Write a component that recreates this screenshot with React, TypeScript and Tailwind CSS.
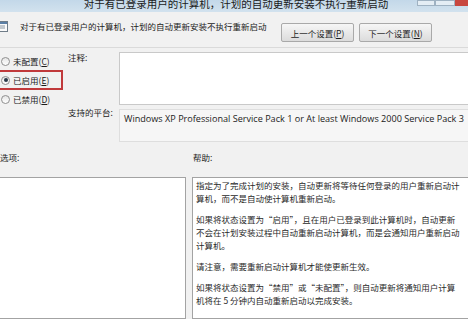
import React from 'react';

const helpParagraphs: string[][] = [
    [
        '指定为了完成计划的安装，自动更新将等待任何登录的用户重新启动计',
        '算机，而不是自动使计算机重新启动。',
    ],
    [
        '如果将状态设置为“启用”，且在用户已登录到此计算机时，自动更新',
        '不会在计划安装过程中自动重新启动计算机，而是会通知用户重新启动',
        '计算机。',
    ],
    ['请注意，需要重新启动计算机才能使更新生效。'],
    [
        '如果将状态设置为“禁用”或“未配置”，则自动更新将通知用户计算',
        '机将在 5 分钟内自动重新启动以完成安装。',
    ],
];

const Radio: React.FC<{ checked?: boolean; label: string; hotkey: string }> = ({ checked, label, hotkey }) => (
    <div className="flex items-center h-full">
        <span className="ml-[1px] w-[9px] h-[9px] rounded-full border border-[#8f8f8f] bg-gradient-to-b from-[#e6e6e6] to-white flex items-center justify-center">
            {checked && <span className="w-[4px] h-[4px] rounded-full bg-[#2a3a4a]" />}
        </span>
        <span className="ml-[3px] text-[8.5px] leading-[12px] text-[#1c1c1c]">
            {label}(<span className="underline">{hotkey}</span>)
        </span>
    </div>
);

const NavButton: React.FC<{ label: string; hotkey: string; width: string }> = ({ label, hotkey, width }) => (
    <button
        className={`${width} h-[19px] rounded-[2px] border border-[#a9a9a9] bg-gradient-to-b from-[#f6f6f6] to-[#dcdcdc] text-[8.5px] leading-[12px] text-[#1c1c1c] flex items-center justify-center`}
    >
        {label}(<span className="underline">{hotkey}</span>)
    </button>
);

const App: React.FC = () => {
    return (
        <div className="w-[468px] h-[319px] overflow-hidden bg-[#f1f1f1] flex flex-col font-['Noto_Sans_CJK_SC',sans-serif]">
            {/* Title bar */}
            <div className="relative h-[12px] shrink-0 bg-gradient-to-b from-[#c3d8e9] to-[#d2e2ee]">
                <div className="text-center text-[10.5px] leading-[8px] text-[#1a1a1a] pl-[4px]">
                    对于有已登录用户的计算机，计划的自动更新安装不执行重新启动
                </div>
                <div className="absolute top-0 right-0 flex h-[6px]">
                    <div className="w-[18px] h-full border border-[#9fb2c2] bg-[#e4edf4]" />
                    <div className="w-[20px] h-full border border-[#9fb2c2] bg-[#e4edf4]" />
                    <div className="w-[13px] h-full bg-[#c8473f]" />
                </div>
            </div>

            {/* Setting name + navigation */}
            <div className="h-[36px] shrink-0 flex items-start border-b border-[#dadada]">
                <div className="flex items-center pt-[8px]">
                    <svg width="12" height="11" viewBox="0 0 12 11" className="-ml-[4px]">
                        <rect x="0.5" y="0.5" width="11" height="10" fill="#fafafa" stroke="#6f7c88" />
                        <rect x="1" y="1" width="10" height="2" fill="#5b7fa6" />
                        <line x1="3" y1="5" x2="9" y2="5" stroke="#8a96a2" />
                        <line x1="3" y1="7" x2="9" y2="7" stroke="#8a96a2" />
                    </svg>
                    <span className="ml-[12px] text-[8.5px] leading-[12px] text-[#1c1c1c]">
                        对于有已登录用户的计算机，计划的自动更新安装不执行重新启动
                    </span>
                </div>
                <div className="ml-auto mr-[36px] pt-[11px] flex gap-[5px]">
                    <NavButton label="上一个设置" hotkey="P" width="w-[73px]" />
                    <NavButton label="下一个设置" hotkey="N" width="w-[73px]" />
                </div>
            </div>

            {/* State, comment, platform */}
            <div className="h-[94px] shrink-0 flex pt-[4px]">
                <div className="w-[68px] flex flex-col">
                    <div className="h-[18px]">
                        <Radio label="未配置" hotkey="C" />
                    </div>
                    <div className="h-[20px] w-[63px] border-y-2 border-r-2 border-[#c0393b]">
                        <Radio checked label="已启用" hotkey="E" />
                    </div>
                    <div className="h-[18px]">
                        <Radio label="已禁用" hotkey="D" />
                    </div>
                </div>
                <div className="w-[51px] flex flex-col text-[8.5px] leading-[12px] text-[#1c1c1c]">
                    <div className="mt-[-1px]">注释:</div>
                    <div className="mt-[43px]">支持的平台:</div>
                </div>
                <div className="flex-1 flex flex-col">
                    <div className="h-[53px] bg-white border border-[#c9c9c9] border-r-0" />
                    <div className="mt-[4px] h-[33px] bg-[#f6f6f6] border border-[#dedede] border-r-0 pl-[4px] pt-[3px] text-[9.1px] leading-[12px] text-[#222] whitespace-nowrap font-['Open_Sans','Noto_Sans_CJK_SC',sans-serif]">
                        Windows XP Professional Service Pack 1 or At least Windows 2000 Service Pack 3
                    </div>
                </div>
            </div>

            {/* Section labels */}
            <div className="h-[35px] shrink-0 flex pt-[9px] text-[8.5px] leading-[12px] text-[#1c1c1c]">
                <div className="w-[193px]">选项:</div>
                <div>帮助:</div>
            </div>

            {/* Options and help panels */}
            <div className="flex-1 flex gap-[6px] min-h-0">
                <div className="w-[186px] bg-white border border-[#a3a3a3] border-l-0" />
                <div className="flex-1 -mr-[4px] bg-white border border-[#a3a3a3] pl-[3px] pt-[1px] text-[8.5px] leading-[13px] text-[#2a2a2a]">
                    {helpParagraphs.map((para, i) => (
                        <div key={i} className={i > 0 ? 'mt-[8px]' : ''}>
                            {para.map((line, j) => (
                                <div key={j} className="whitespace-nowrap">
                                    {line}
                                </div>
                            ))}
                        </div>
                    ))}
                </div>
            </div>
        </div>
    );
};

export default App;
